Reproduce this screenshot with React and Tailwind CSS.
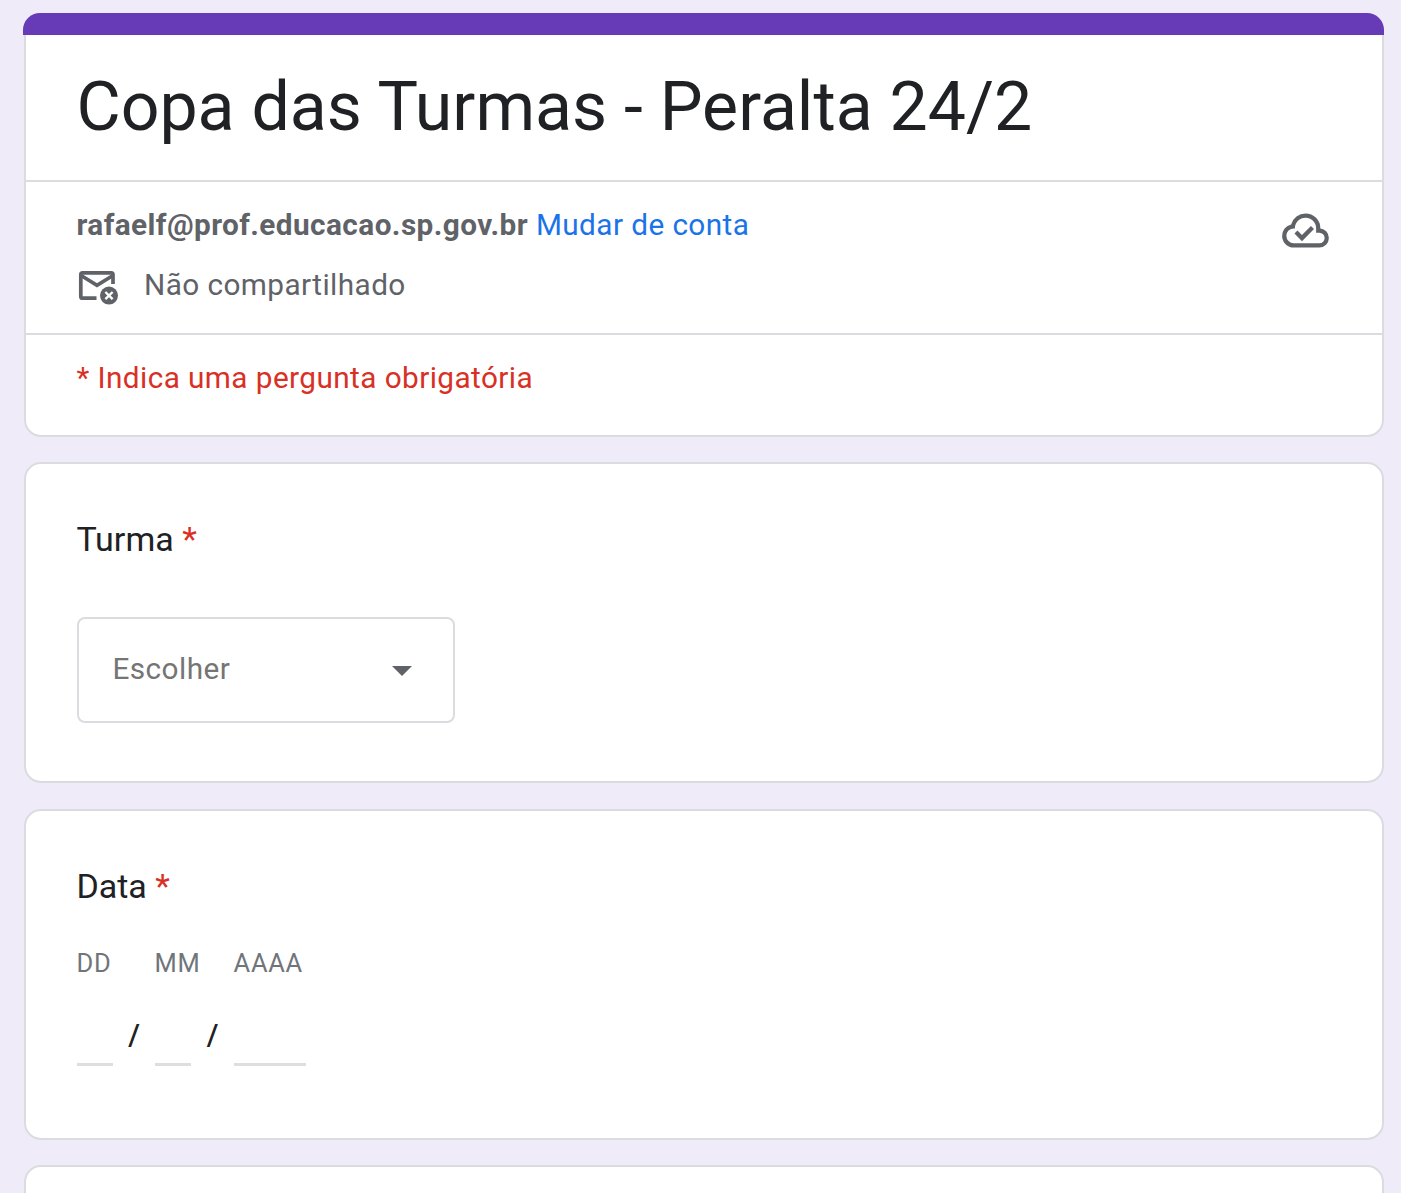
import React, { useState } from "react";

const CloudDoneIcon = () => (
  <svg className="size-[51px] shrink-0 fill-[#5f6368]" viewBox="0 -960 960 960">
    <path d="M414-280l226-226-58-58-169 169-84-84-57 57 142 142ZM260-160q-91 0-155.5-63T40-377q0-78 47-139t123-78q25-92 100-149t170-57q117 0 198.5 81.5T760-520q69 8 114.5 59.5T920-340q0 75-52.5 127.5T740-160H260Zm0-80h480q42 0 71-29t29-71q0-42-29-71t-71-29h-60v-80q0-83-58.5-141.5T480-720q-83 0-141.5 58.5T280-520h-20q-58 0-99 41t-41 99q0 58 41 99t99 41Z" />
  </svg>
);

const MailOffIcon = () => (
  <svg className="mt-[4px] h-[36px] w-[42px] shrink-0" viewBox="0 0 42 36" fill="none">
    <path
      d="M19.5 29.2H5.6Q3.8 29.2 3.8 27.4V5.6Q3.8 3.8 5.6 3.8H34.2Q36 3.8 36 5.6V15"
      stroke="#5f6368"
      strokeWidth="3.7"
    />
    <path d="M4.5 6.8L20 16.4L35.5 6.8" stroke="#5f6368" strokeWidth="3.7" />
    <circle cx="32" cy="26.6" r="9" fill="#5f6368" />
    <path d="M28.4 23L35.6 30.2M35.6 23L28.4 30.2" stroke="#fff" strokeWidth="2.4" />
  </svg>
);

const Question = ({ title, className, children }) => (
  <section
    className={`rounded-[17px] border-2 border-[#dadce0] bg-white px-[51px] pt-[50px] ${className}`}
  >
    <h2 className="-ml-[0.6px] text-[34px] leading-[51px] text-[#202124]">
      {title} <span className="text-[#d93025]">*</span>
    </h2>
    {children}
  </section>
);

const DateField = ({ label, name, className, value, onChange }) => (
  <label className={`flex flex-col ${className}`}>
    <span className="-ml-[0.4px] text-[25.5px] leading-[34px] tracking-[0.64px] whitespace-nowrap text-[#70757a]">
      {label}
    </span>
    <input
      name={name}
      value={value}
      onChange={onChange}
      className="mt-[30px] h-[56px] w-full border-b-3 border-[#dedede] text-[25px] outline-none"
    />
  </label>
);

const Slash = ({ className }) => (
  <span
    className={`pt-[71px] text-center text-[30px] leading-[36px] font-medium text-[#202124] ${className}`}
  >
    /
  </span>
);

const App = () => {
  const [date, setDate] = useState({ day: "", month: "", year: "" });

  const handleChange = (e) => {
    setDate({ ...date, [e.target.name]: e.target.value });
  };

  return (
    <div className="h-[1193px] overflow-hidden bg-[#f0ebf8] pt-[13px] pr-[17px] pl-[24px] font-['Roboto',sans-serif]">
      <div className="-ml-px h-[22px] rounded-t-[17px] bg-[#673ab7]" />
      <header className="h-[402px] rounded-b-[17px] border-2 border-t-0 border-[#dadce0] bg-white">
        <h1 className="h-[145px] px-[50.4px] pt-[29px] text-[68px] leading-[86px] text-[#202124]">
          Copa das Turmas - Peralta 24/2
        </h1>
        <div className="flex h-[153px] justify-between border-t-2 border-[#dadce0] pr-[51px] pl-[50.5px] pt-[23px] text-[29.75px] leading-[40px] tracking-[0.42px] text-[#5f6368]">
          <div>
            <p>
              <strong className="font-bold">rafaelf@prof.educacao.sp.gov.br</strong>{" "}
              <a className="text-[#1a73e8]">Mudar de conta</a>
            </p>
            <div className="mt-[20px] flex">
              <MailOffIcon />
              <span className="ml-[25.5px]">Não compartilhado</span>
            </div>
          </div>
          <CloudDoneIcon />
        </div>
        <p className="border-t-2 border-[#dadce0] px-[50.4px] pt-[23px] text-[29.75px] leading-[40px] tracking-[0.42px] text-[#d93025]">
          * Indica uma pergunta obrigatória
        </p>
      </header>

      <Question title="Turma" className="mt-[25px] h-[321px]">
        <button className="mt-[52px] flex h-[106px] w-[378px] items-center justify-between rounded-[8px] border-2 border-[#dadce0] pr-[41px] pb-[2px] pl-[33.5px] text-[29.75px] tracking-[0.42px] text-[#757575]">
          Escolher
          <svg className="mt-[4px] h-[10px] w-[20px] fill-[#5f6368]" viewBox="0 0 20 10">
            <path d="M0 0H20L10 10Z" />
          </svg>
        </button>
      </Question>

      <Question title="Data" className="mt-[26px] h-[331px]">
        <div className="mt-[34px] flex">
          <DateField label="DD" name="day" className="w-[36px]" value={date.day} onChange={handleChange} />
          <Slash className="w-[42px]" />
          <DateField label="MM" name="month" className="w-[36px]" value={date.month} onChange={handleChange} />
          <Slash className="w-[43px]" />
          <DateField label="AAAA" name="year" className="w-[72px]" value={date.year} onChange={handleChange} />
        </div>
      </Question>

      <section className="mt-[25px] h-[200px] rounded-[17px] border-2 border-[#dadce0] bg-white" />
    </div>
  );
};

export default App;
